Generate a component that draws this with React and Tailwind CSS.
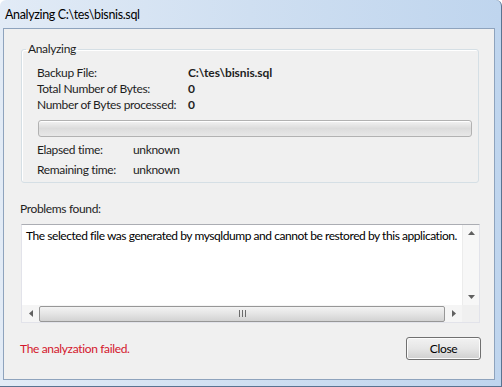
import React from "react";

const font = { fontFamily: 'Lato, "Noto Sans", Arial, sans-serif' };

// small black arrow used on the scrollbars
const Arrow = ({ dir }) => {
  const pts = {
    up: "0,4 3.5,0 7,4",
    down: "0,0 3.5,4 7,0",
    left: "4,0 0,3.5 4,7",
    right: "0,0 4,3.5 0,7",
  }[dir];
  const vertical = dir === "up" || dir === "down";
  return (
    <svg width={vertical ? 7 : 4} height={vertical ? 4 : 7} viewBox={vertical ? "0 0 7 4" : "0 0 4 7"}>
      <polygon points={pts} fill="#606060" />
    </svg>
  );
};

function App() {
  return (
    <div
      className="w-[502px] h-[387px] flex flex-col pl-[3px] pr-[6px] pb-[6px] rounded-t-[6px] bg-gradient-to-r from-[#e2ebf6] via-[#cfdff1] to-[#bfd5ee] border-r border-b border-[#5a7391] text-[12px] leading-[16px] tracking-[-0.35px] text-[#1e1e1e] whitespace-nowrap"
      style={font}
    >
      {/* title bar */}
      <div className="h-[28px] flex items-center pl-[2px] pt-[2px] text-black text-[12.5px]">
        Analyzing C:\tes\bisnis.sql
      </div>

      {/* client area */}
      <div className="flex-1 flex flex-col bg-[#f0f0f0] border border-[#8ea3bd]">
        <fieldset className="mt-[12px] ml-[17px] mr-[15px] border border-[#d5dfe5] rounded-[3px] pl-[15px] pr-[6px] pb-[4px] shadow-[inset_1px_1px_0_#ffffff]">
          <legend className="ml-[-11px] px-[2px] text-[#1e1e1e]">Analyzing</legend>

          <div className="pt-[8px]">
            <div className="flex h-[16px]">
              <span className="w-[151px]">Backup File:</span>
              <span className="font-bold tracking-[-0.1px]">C:\tes\bisnis.sql</span>
            </div>
            <div className="flex h-[16px]">
              <span className="w-[151px]">Total Number of Bytes:</span>
              <span className="font-bold">0</span>
            </div>
            <div className="flex h-[16px]">
              <span className="w-[151px]">Number of Bytes processed:</span>
              <span className="font-bold">0</span>
            </div>
          </div>

          {/* progress bar */}
          <div className="mt-[7px] ml-[1px] h-[17px] rounded-[3px] border border-[#b2b2b2] bg-gradient-to-b from-[#f3f3f3] via-[#dcdcdc] to-[#e8e8e8] shadow-[inset_0_1px_0_#ffffff]" />

          <div className="mt-[5px] flex flex-col gap-[4px]">
            <div className="flex h-[16px]">
              <span className="w-[96px]">Elapsed time:</span>
              <span>unknown</span>
            </div>
            <div className="flex h-[16px]">
              <span className="w-[96px]">Remaining time:</span>
              <span>unknown</span>
            </div>
          </div>
        </fieldset>

        <div className="mt-[18px] ml-[16px] h-[16px]">Problems found:</div>

        {/* text box with scrollbars */}
        <div className="mt-[7px] ml-[17px] w-[459px] h-[99px] border border-[#e2e3ea] border-t-[#abadb3] bg-white flex flex-col">
          <div className="flex-1 flex min-h-0">
            <div className="flex-1 pl-[4px] pt-[3px] overflow-hidden text-black tracking-[-0.45px]">
              The selected file was generated by mysqldump and cannot be restored by this application.
            </div>
            <div className="w-[17px] flex flex-col items-center justify-between bg-[#f7f7f7] border-l border-[#ececec] py-[6px]">
              <Arrow dir="up" />
              <Arrow dir="down" />
            </div>
          </div>
          <div className="h-[17px] flex">
            <div className="flex-1 flex items-center bg-[#f5f5f5]">
              <div className="w-[17px] flex justify-center">
                <Arrow dir="left" />
              </div>
              <div className="flex-1 h-[16px] rounded-[2px] border border-[#979797] bg-gradient-to-b from-[#f3f3f3] via-[#e4e4e4] to-[#d2d2d2] flex items-center justify-center gap-[2px]">
                <span className="w-px h-[7px] bg-[#6b6b6b]" />
                <span className="w-px h-[7px] bg-[#6b6b6b]" />
                <span className="w-px h-[7px] bg-[#6b6b6b]" />
              </div>
              <div className="w-[17px] flex justify-center">
                <Arrow dir="right" />
              </div>
            </div>
            <div className="w-[17px] bg-[#f0f0f0]" />
          </div>
        </div>

        {/* footer */}
        <div className="mt-[14px] mr-[13px] ml-[16px] flex items-center justify-between">
          <span className="text-[#d4162c]">The analyzation failed.</span>
          <button className="w-[75px] h-[23px] rounded-[3px] border border-[#707070] bg-gradient-to-b from-[#f2f2f2] via-[#e6e6e6] to-[#cfcfcf] shadow-[inset_0_0_0_1px_#fcfcfc] text-black tracking-[-0.35px]" style={font}>
            Close
          </button>
        </div>
      </div>
    </div>
  );
}

export default App;
